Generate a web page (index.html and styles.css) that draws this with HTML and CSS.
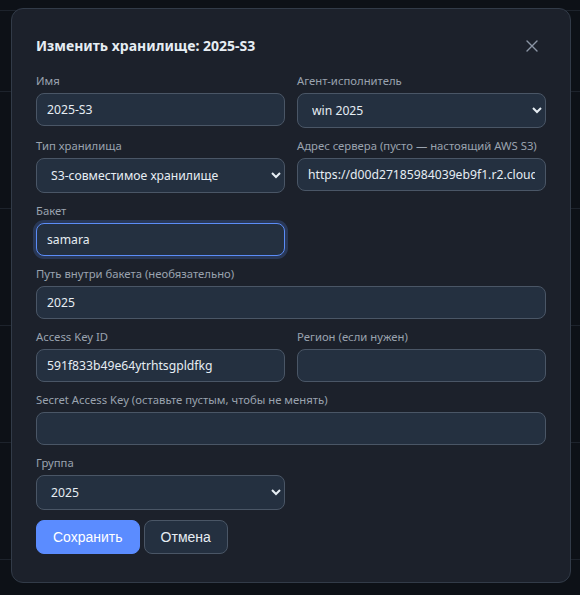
FILE: index.html
```html
<!DOCTYPE html>
<html lang="ru">
<head>
  <meta charset="UTF-8">
  <meta name="viewport" content="width=device-width, initial-scale=1.0">
  <title>Хранилища</title>
  <link rel="stylesheet" href="styles.css">
</head>
<body>
  <div class="page">
    <div class="row row-top"></div>
    <div class="row row-head"></div>
    <div class="row"></div>
    <div class="row"></div>
    <div class="row"></div>
    <div class="row"></div>
  </div>

  <div class="modal">
    <div class="modal-header">
      <h2>Изменить хранилище: 2025-S3</h2>
      <button class="close-btn" type="button" aria-label="Закрыть">
        <svg width="12" height="12" viewBox="0 0 12 12">
          <path d="M1 1L11 11M11 1L1 11" stroke="currentColor" stroke-width="1.4" stroke-linecap="round"/>
        </svg>
      </button>
    </div>

    <form class="form">
      <div class="form-grid">
        <div class="field">
          <label>Имя</label>
          <input type="text" value="2025-S3">
        </div>
        <div class="field">
          <label>Агент-исполнитель</label>
          <select><option>win 2025</option></select>
        </div>

        <div class="field">
          <label>Тип хранилища</label>
          <select><option>S3-совместимое хранилище</option></select>
        </div>
        <div class="field">
          <label>Адрес сервера (пусто — настоящий AWS S3)</label>
          <input type="text" value="https://d00d27185984039eb9f1.r2.cloudflarestorage.com">
        </div>

        <div class="field">
          <label>Бакет</label>
          <input type="text" class="is-focused" value="samara">
        </div>
        <div class="field"></div>

        <div class="field wide">
          <label>Путь внутри бакета (необязательно)</label>
          <input type="text" value="2025">
        </div>

        <div class="field">
          <label>Access Key ID</label>
          <input type="text" value="591f833b49e64ytrhtsgpldfkg">
        </div>
        <div class="field">
          <label>Регион (если нужен)</label>
          <input type="text" value="">
        </div>

        <div class="field wide">
          <label>Secret Access Key (оставьте пустым, чтобы не менять)</label>
          <input type="password" value="">
        </div>

        <div class="field">
          <label>Группа</label>
          <select><option>2025</option></select>
        </div>
      </div>

      <div class="actions">
        <button type="submit" class="btn btn-primary">Сохранить</button>
        <button type="button" class="btn btn-secondary">Отмена</button>
      </div>
    </form>
  </div>
</body>
</html>
```

FILE: styles.css
```css
body {
  font-family: "Noto Sans", "Open Sans", sans-serif;
  background-color: #0d1117;
  color: #e6edf3;
  margin: 0;
  color-scheme: dark;
}
.page {
  height: 595px;
  overflow: hidden;
}
.row {
  height: 116px;
  border-bottom: 1px solid #1d232c;
}
.row-top {
  height: 10px;
}
.row-head {
  height: 80px;
}

.modal {
  position: absolute;
  top: 8px;
  left: 11px;
  width: 560px;
  box-sizing: border-box;
  padding: 24px 24px 28px;
  background-color: #1c212b;
  border: 1px solid #323b48;
  border-radius: 12px;
}
.modal-header {
  display: flex;
  align-items: center;
  justify-content: space-between;
  margin-bottom: 14px;
}
.modal-header h2 {
  margin: 0;
  font-size: 14px;
  font-weight: 700;
  line-height: 26px;
  color: #e6edf3;
}
.close-btn {
  display: flex;
  align-items: center;
  justify-content: center;
  width: 26px;
  height: 26px;
  margin-right: 1px;
  padding: 0;
  background: none;
  border: none;
  color: #8b95a5;
  cursor: pointer;
}

.form-grid {
  display: grid;
  grid-template-columns: minmax(0, 1fr) minmax(0, 1fr);
  column-gap: 12px;
}
.field {
  display: flex;
  flex-direction: column;
  margin-bottom: 10px;
}
.field.wide {
  grid-column: 1 / -1;
}
.field label {
  font-size: 11.3px;
  line-height: 16px;
  color: #9aa3af;
  margin-bottom: 4px;
  white-space: nowrap;
}
.field input,
.field select {
  height: 33px;
  box-sizing: border-box;
  padding: 0 10px;
  font-family: inherit;
  font-size: 12.2px;
  color: #e6edf3;
  background-color: #243040;
  border: 1px solid #4a5666;
  border-radius: 8px;
  outline: none;
}
.field select {
  height: 35px;
}
.field input.is-focused {
  border-color: #5b8cf7;
  box-shadow: 0 0 0 3px rgba(91, 140, 247, 0.22);
}

.actions {
  display: flex;
  gap: 4px;
}
.btn {
  height: 34px;
  padding: 0 16px;
  font-family: "Liberation Sans", Arial, sans-serif;
  font-size: 14px;
  border-radius: 8px;
  cursor: pointer;
}
.btn-primary {
  background-color: #5b8cff;
  border: 1px solid #5b8cff;
  color: #ffffff;
}
.btn-secondary {
  background-color: #243040;
  border: 1px solid #4a5666;
  color: #e6edf3;
}
```
